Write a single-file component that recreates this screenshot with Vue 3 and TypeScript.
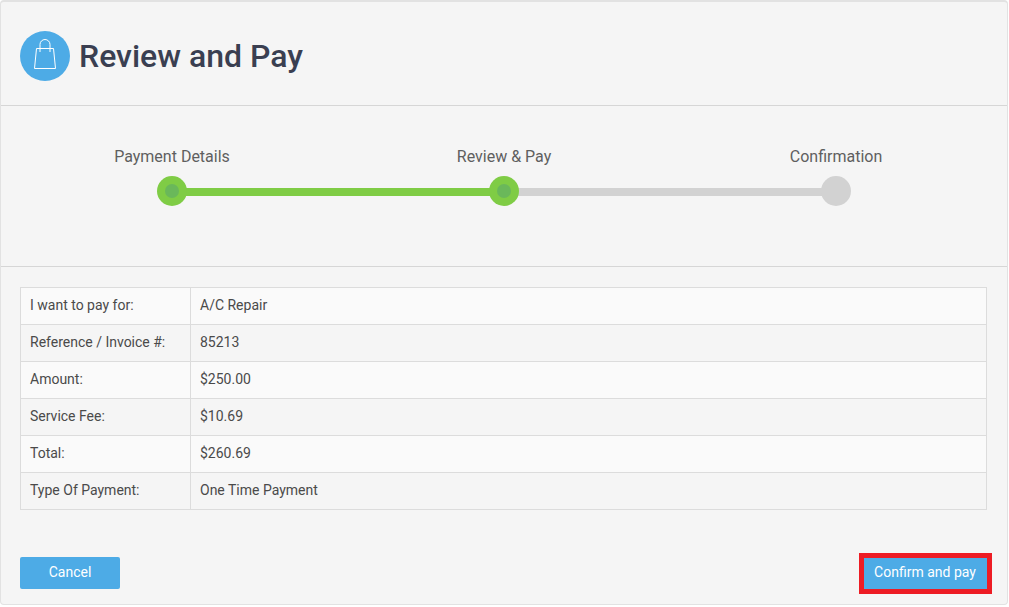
<script setup lang="ts">
interface Step { label: string; state: 'done' | 'current' | 'todo' }
const steps: Step[] = [
  { label: 'Payment Details', state: 'done' },
  { label: 'Review & Pay', state: 'current' },
  { label: 'Confirmation', state: 'todo' },
]
const rows: [string, string][] = [
  ['I want to pay for:', 'A/C Repair'],
  ['Reference / Invoice #:', '85213'],
  ['Amount:', '$250.00'],
  ['Service Fee:', '$10.69'],
  ['Total:', '$260.69'],
  ['Type Of Payment:', 'One Time Payment'],
]
</script>

<template>
  <div class="card">
    <header class="head">
      <span class="head-icon">
        <svg width="22" height="30" viewBox="0 0 22 30" fill="none" stroke="#fff" stroke-width="1">
          <path d="M2.500 9.500h17l2 20H.5z" />
          <path d="M6 13V5.500a5 5 0 0 1 10 0V13" />
        </svg>
      </span>
      <h1>Review and Pay</h1>
    </header>

    <section class="steps">
      <div v-for="(s, i) in steps" :key="s.label" class="step">
        <div class="step-label">{{ s.label }}</div>
        <div class="track">
          <span v-if="i < steps.length - 1" class="bar" :class="{ on: s.state === 'done' }"></span>
          <span class="dot" :class="{ on: s.state !== 'todo' }"></span>
        </div>
      </div>
    </section>

    <section class="summary">
      <table>
        <tbody>
          <tr v-for="r in rows" :key="r[0]">
            <td class="key">{{ r[0] }}</td>
            <td>{{ r[1] }}</td>
          </tr>
        </tbody>
      </table>
      <div class="actions">
        <button class="btn cancel">Cancel</button>
        <span class="marked"><button class="btn confirm">Confirm and pay</button></span>
      </div>
    </section>
  </div>
</template>

<style>
html, body { margin: 0; background: #fff; }
</style>

<style scoped>
.card {
  box-sizing: border-box;
  width: 1008px;
  height: 605px;
  background: #f5f5f5;
  border: 1px solid #e2e2e2;
  border-top-width: 2px;
  border-radius: 4px;
  font-family: Roboto, "Liberation Sans", sans-serif;
  color: #444;
}
.head {
  box-sizing: border-box;
  height: 104px;
  display: flex;
  align-items: center;
  gap: 9px;
  padding: 4px 19px 0;
  border-bottom: 1px solid #d6d6d6;
}
.head-icon {
  width: 50px;
  height: 50px;
  border-radius: 50%;
  background: #4dabe6;
  display: flex;
  align-items: center;
  justify-content: center;
}
.head-icon svg { margin-bottom: 4px; }
.head h1 {
  margin: 0;
  font-size: 32px;
  font-weight: 500;
  color: #3a3f51;
}
.steps {
  box-sizing: border-box;
  height: 161px;
  display: grid;
  grid-template-columns: repeat(3, 332px);
  padding: 41px 5px 0;
  border-bottom: 1px solid #d6d6d6;
}
.step { display: flex; flex-direction: column; align-items: center; }
.step-label {
  font-size: 16px;
  line-height: 20px;
  color: #5f5f5f;
  margin-bottom: 9px;
}
.track { position: relative; width: 30px; height: 30px; }
.dot {
  position: absolute;
  inset: 0;
  border-radius: 50%;
  background: #d2d2d2;
}
.dot.on { background: #7fcc45; }
.dot.on::after {
  content: "";
  position: absolute;
  left: 8px;
  top: 8px;
  width: 14px;
  height: 14px;
  border-radius: 50%;
  background: #6ab85a;
}
.bar {
  position: absolute;
  left: 15px;
  top: 12px;
  width: 332px;
  height: 8px;
  background: #d2d2d2;
}
.bar.on { background: #7fcc45; }
.summary { padding: 20px 19px 0; }
table {
  width: 967px;
  border-collapse: collapse;
  table-layout: fixed;
  font-size: 14px;
  color: #4a4a4a;
}
td {
  height: 34px;
  padding: 0 9px 2px;
  border: 1px solid #dcdcdc;
}
td.key { width: 151px; }
tr:nth-child(odd) { background: #fafafa; }
.actions {
  display: flex;
  justify-content: space-between;
  align-items: flex-start;
  margin-top: 43px;
}
.btn {
  border: 0;
  border-radius: 2px;
  background: #4dabe6;
  color: #fff;
  font: 14px Roboto, "Liberation Sans", sans-serif;
  height: 32px;
  padding: 0 0 2px;
}
.cancel { width: 100px; margin-top: 4px; }
.confirm { width: 123px; height: 31px; border-radius: 0; display: block; padding: 0 1px 3px 0; }
.marked {
  display: block;
  border: 5px solid #ed1c24;
  margin-right: -4px;
}
</style>
